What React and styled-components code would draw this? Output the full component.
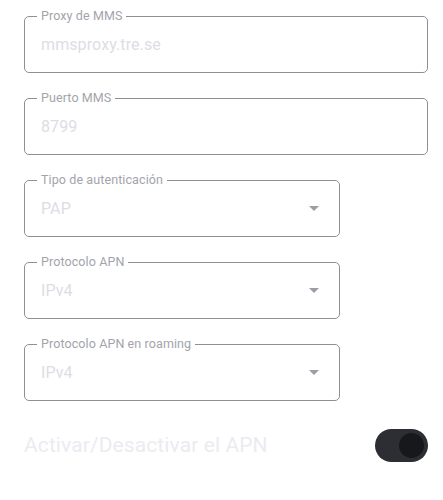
import React from "react";
import styled, { createGlobalStyle } from "styled-components";

const Global = createGlobalStyle`
  html, body { margin: 0; padding: 0; background: #ffffff; }
  body { font-family: Roboto, "Noto Sans", sans-serif; }
  * { box-sizing: border-box; }
`;

const Page = styled.div`
  display: flex;
  flex-direction: column;
  gap: 18px;
  padding: 9px 15px 0 24px;
  width: 443px;
`;

const Field = styled.fieldset`
  margin: 0;
  width: ${(p) => (p.$narrow ? "316px" : "404px")};
  height: 64px;
  padding: 0 12px;
  border: 1px solid #8e9098;
  border-radius: 5px;
  min-width: 0;
`;

const Legend = styled.legend`
  padding: 0 4px;
  font-size: 12.5px;
  line-height: 14px;
  color: #a3a4ab;
  letter-spacing: 0.1px;
`;

const ValueRow = styled.div`
  height: 49px;
  display: flex;
  align-items: center;
  justify-content: space-between;
  padding: 0 8px 6px 4px;
`;

const Value = styled.span`
  font-size: 16px;
  color: #dddde4;
  letter-spacing: 0.1px;
`;

const Arrow = styled.svg`
  width: 10px;
  height: 5px;
  display: block;
`;

const ToggleRow = styled.div`
  display: flex;
  align-items: center;
  justify-content: space-between;
  margin-top: 9px;
  height: 34px;
`;

const ToggleLabel = styled.span`
  font-size: 21px;
  color: #ebebf1;
  letter-spacing: 0.1px;
`;

const Track = styled.div`
  width: 53px;
  height: 33px;
  border-radius: 17px;
  background: #2d2e33;
  display: flex;
  align-items: center;
  justify-content: flex-end;
  padding-right: 4px;
`;

const Thumb = styled.div`
  width: 25px;
  height: 25px;
  border-radius: 50%;
  background: #17181c;
`;

function TextField({ label, value }) {
  return (
    <Field>
      <Legend>{label}</Legend>
      <ValueRow>
        <Value>{value}</Value>
      </ValueRow>
    </Field>
  );
}

function SelectField({ label, value }) {
  return (
    <Field $narrow>
      <Legend>{label}</Legend>
      <ValueRow>
        <Value>{value}</Value>
        <Arrow viewBox="0 0 10 5">
          <path d="M0 0 L10 0 L5 5 Z" fill="#9c9ea6" />
        </Arrow>
      </ValueRow>
    </Field>
  );
}

export default function App() {
  return (
    <>
      <Global />
      <Page>
        <TextField label="Proxy de MMS" value="mmsproxy.tre.se" />
        <TextField label="Puerto MMS" value="8799" />
        <SelectField label="Tipo de autenticación" value="PAP" />
        <SelectField label="Protocolo APN" value="IPv4" />
        <SelectField label="Protocolo APN en roaming" value="IPv4" />
        <ToggleRow>
          <ToggleLabel>Activar/Desactivar el APN</ToggleLabel>
          <Track>
            <Thumb />
          </Track>
        </ToggleRow>
      </Page>
    </>
  );
}
